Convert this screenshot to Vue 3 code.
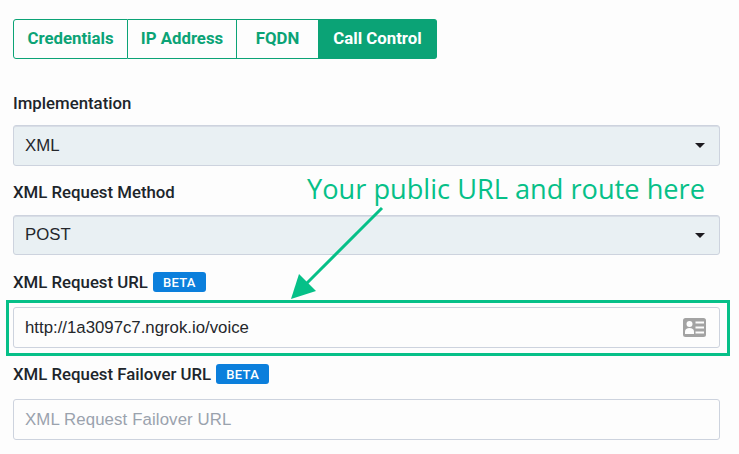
<script setup>
const tabs = [
  { name: 'Credentials', width: '115px' },
  { name: 'IP Address', width: '109px' },
  { name: 'FQDN', width: '82px' },
  { name: 'Call Control', width: '118px', active: true },
]
</script>

<template>
  <main class="page">
    <nav class="tabs">
      <span
        v-for="tab in tabs"
        :key="tab.name"
        class="tab"
        :class="{ active: tab.active }"
        :style="{ width: tab.width }"
      >{{ tab.name }}</span>
    </nav>

    <form class="form">
      <label class="label first">Implementation</label>
      <div class="control select">
        <span>XML</span>
        <i class="caret"></i>
      </div>

      <label class="label second">XML Request Method</label>
      <div class="control select short">
        <span>POST</span>
        <i class="caret"></i>
      </div>

      <label class="label third">XML Request URL <b class="badge">BETA</b></label>
      <div class="highlight">
        <div class="control input">
          <span>http://1a3097c7.ngrok.io/voice</span>
          <svg class="card" width="23" height="19" viewBox="0 0 23 19">
            <rect x="0" y="0" width="23" height="19" rx="2.5" fill="#a3a3a3" />
            <circle cx="6.5" cy="6" r="3" fill="#fdfdfd" />
            <path d="M2 16v-2.500c0-2.200 1.800-3.500 4.500-3.500s4.500 1.300 4.500 3.500V16z" fill="#fdfdfd" />
            <rect x="12.500" y="3.500" width="8.500" height="2" fill="#fdfdfd" />
            <rect x="12.500" y="8.500" width="8.500" height="2" fill="#fdfdfd" />
            <rect x="12.500" y="13.500" width="8.500" height="2" fill="#fdfdfd" />
          </svg>
        </div>
      </div>

      <label class="label fourth">XML Request Failover URL <b class="badge">BETA</b></label>
      <div class="control input placeholder">
        <span>XML Request Failover URL</span>
      </div>
    </form>

    <div class="callout">Your public URL and route here</div>
    <svg class="arrow" width="110" height="100" viewBox="0 0 110 100">
      <line x1="91" y1="3" x2="14" y2="80" stroke="#06c088" stroke-width="3" />
      <polygon points="0,94 8,69 25,86" fill="#06c088" />
    </svg>
  </main>
</template>

<style scoped>
.page {
  position: relative;
  width: 739px;
  height: 454px;
  box-sizing: border-box;
  padding: 19px 19px 0 13px;
  overflow: hidden;
  background: #fdfdfd;
  font-family: Roboto, sans-serif;
}

.tabs {
  display: flex;
  width: 424px;
  height: 40px;
}

.tab {
  display: flex;
  align-items: center;
  justify-content: center;
  box-sizing: border-box;
  height: 40px;
  padding-bottom: 3px;
  border: 1px solid #0ba376;
  border-left-width: 0;
  color: #0ba376;
  font-size: 16.8px;
  font-weight: 700;
}

.tab:first-child {
  border-left-width: 1px;
  border-radius: 3px 0 0 3px;
}

.tab.active {
  border-radius: 0 3px 3px 0;
  background: #0ba376;
  color: #fff;
}

.form {
  display: flex;
  flex-direction: column;
}

.label {
  display: flex;
  align-items: center;
  height: 20px;
  color: #20252b;
  font-size: 16.8px;
  font-weight: 500;
}

.first { margin-top: 34px; margin-bottom: 12px; }
.second { margin-top: 16px; margin-bottom: 13px; }
.third { margin-top: 17px; margin-bottom: 8px; }
.fourth { margin-top: 8px; margin-bottom: 15px; }

.control {
  display: flex;
  align-items: center;
  justify-content: space-between;
  box-sizing: border-box;
  width: 707px;
  height: 41px;
  padding: 0 12px 0 11px;
  border: 1px solid #cdd3de;
  border-radius: 3px;
  color: #24272b;
  font-family: "Liberation Sans", Arial, sans-serif;
  font-size: 16.8px;
}

.select {
  background: #e9f0f3;
  box-shadow: inset 0 1px 0 #d8dde6;
}

.select.short { height: 40px; }

.caret {
  width: 0;
  height: 0;
  margin-right: 2px;
  border-top: 5px solid #1c1a1f;
  border-right: 5px solid transparent;
  border-left: 5px solid transparent;
}

.input { background: #fdfdfd; }

.placeholder {
  color: #9aa2ad;
  letter-spacing: .12px;
}

.card {
  margin-right: 1px;
}

.badge {
  display: inline-flex;
  align-items: center;
  justify-content: center;
  width: 53px;
  height: 20px;
  margin-left: 5px;
  border-radius: 3px;
  background: #0b7fdc;
  color: #fff;
  font-size: 13px;
  font-weight: 500;
  letter-spacing: .3px;
}

.highlight {
  box-sizing: border-box;
  width: 724px;
  height: 56px;
  margin-left: -7px;
  padding: 4px 0 0 4px;
  border: 3px solid #06c088;
}

.callout {
  position: absolute;
  top: 170px;
  left: 307px;
  color: #06c088;
  font-family: "Open Sans", sans-serif;
  font-size: 27.2px;
  white-space: nowrap;
}

.arrow {
  position: absolute;
  top: 205px;
  left: 291px;
}
</style>
